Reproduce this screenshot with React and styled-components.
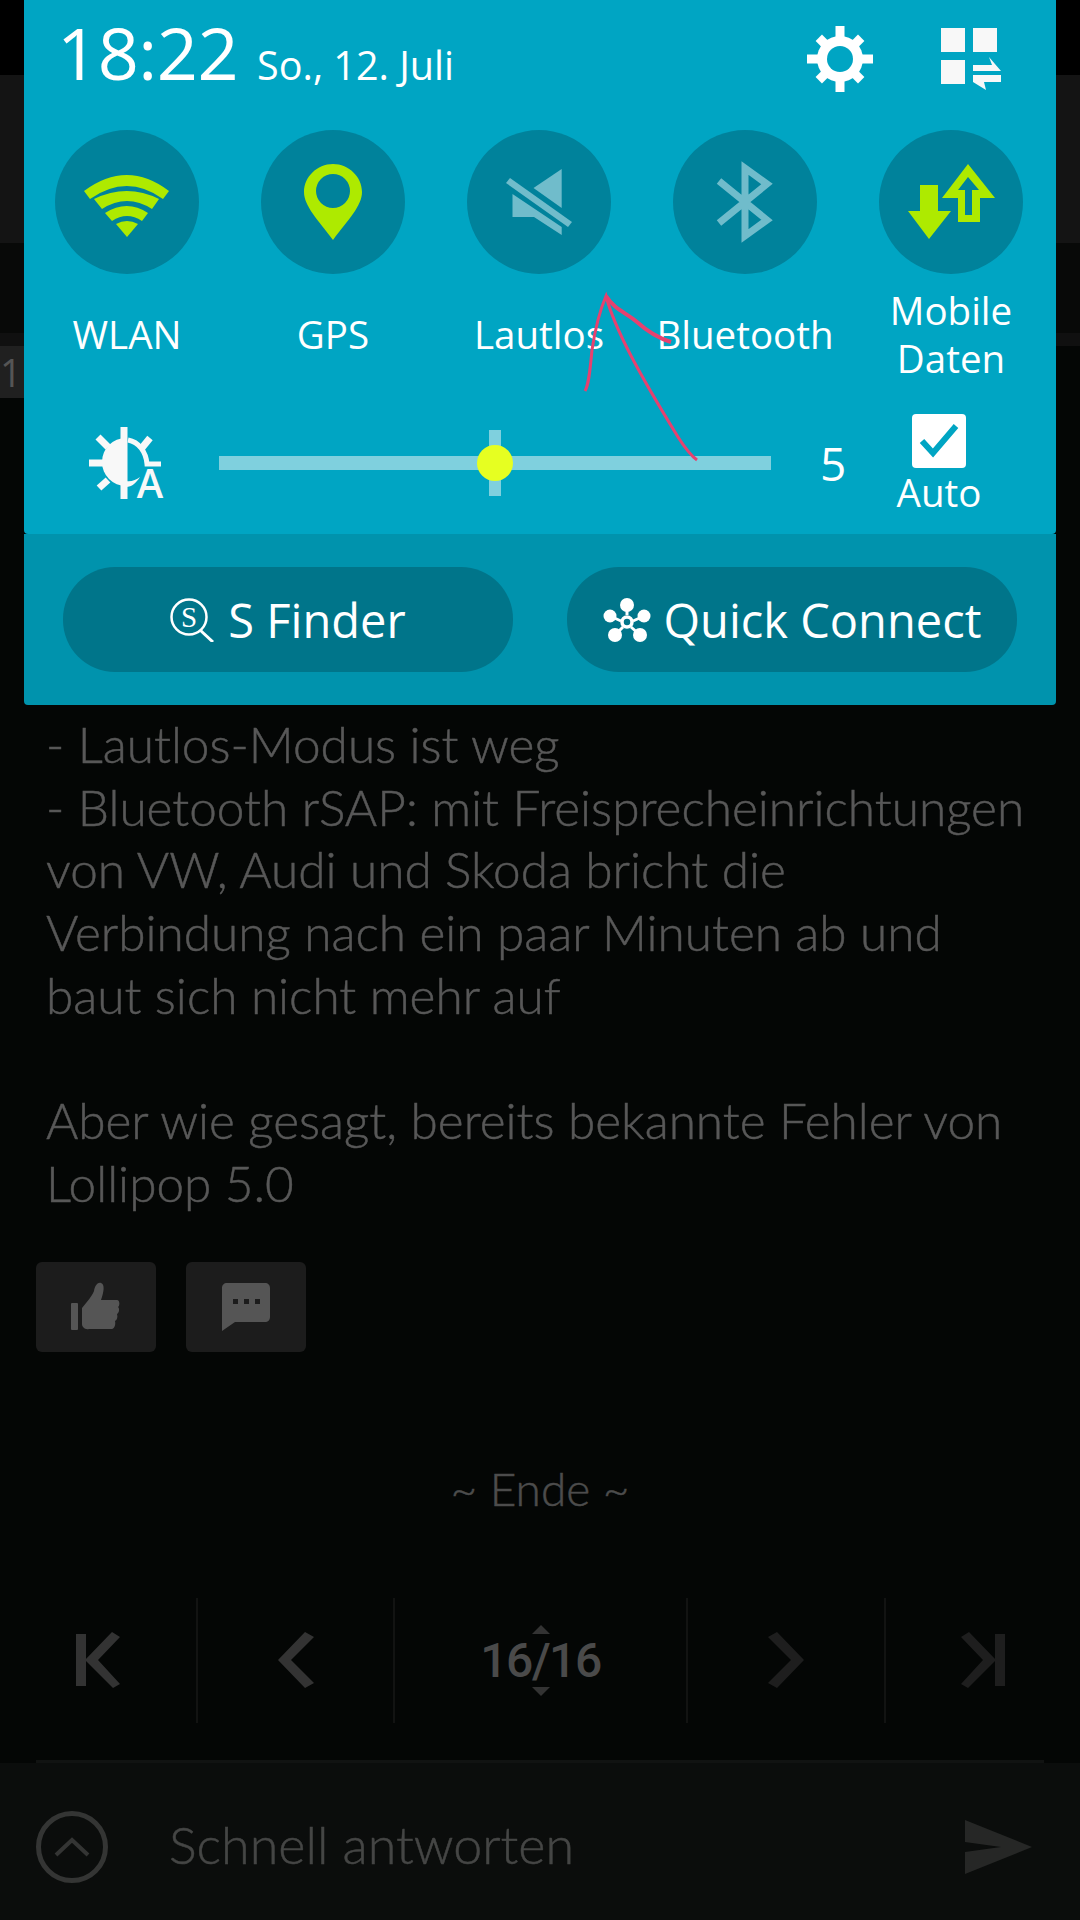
import React from "react";
import styled, { createGlobalStyle } from "styled-components";

const GlobalStyle = createGlobalStyle`
  html, body { margin: 0; padding: 0; background: #040605; }
  * { box-sizing: border-box; }
`;

const Screen = styled.div`
  position: relative;
  width: 1080px;
  height: 1920px;
  overflow: hidden;
  background: #040605;
  font-family: "Open Sans", "Liberation Sans", sans-serif;
`;

const TopBar = styled.div`
  height: 75px;
  background: #000;
`;

const HeaderBand = styled.div`
  height: 168px;
  background: #141414;
`;

const MiddleBand = styled.div`
  height: 103px;
  background: #080908;
  border-bottom: 13px solid #101010;
`;

const PageTag = styled.div`
  width: 24px;
  height: 52px;
  background: #202020;
  color: #555;
  font-size: 38px;
  line-height: 52px;
`;

const Post = styled.div`
  padding: 315px 46px 0;
  font-family: Lato, "Open Sans", sans-serif;
  font-weight: 300;
  font-size: 49.5px;
  line-height: 62.7px;
  color: #585858;
  -webkit-text-stroke: 0.5px #585858;
`;

const Line = styled.div`
  white-space: nowrap;
  min-height: 62.7px;
`;

const PostActions = styled.div`
  display: flex;
  gap: 30px;
  margin: 47px 0 0 -10px;
`;

const ActionButton = styled.div`
  width: 120px;
  height: 90px;
  border-radius: 6px;
  background: #1c1c1c;
  display: flex;
  align-items: center;
  justify-content: center;
`;

const EndMark = styled.div`
  margin-top: 107px;
  text-align: center;
  font-family: Lato, "Open Sans", sans-serif;
  font-weight: 300;
  font-size: 46px;
  line-height: 60px;
  color: #4c4c4c;
  -webkit-text-stroke: 0.5px #4c4c4c;
`;

const Pager = styled.div`
  display: grid;
  grid-template-columns: 196px 197px 293px 198px 196px;
  height: 125px;
  margin-top: 79px;
`;

const PagerCell = styled.div`
  display: flex;
  align-items: center;
  justify-content: center;
  position: relative;
  border-left: ${(p) => (p.$first ? "none" : "2px solid #121312")};
`;

const PageCount = styled.div`
  font-family: Roboto, "Open Sans", sans-serif;
  font-weight: 500;
  font-size: 48px;
  letter-spacing: -1.5px;
  color: #4a4a4a;
`;

const Arrow = styled.span`
  position: absolute;
  left: 50%;
  margin-left: -9px;
  ${(p) => (p.$up ? "top: 27px;" : "bottom: 27px;")}
  width: 0;
  height: 0;
  border-left: 9px solid transparent;
  border-right: 9px solid transparent;
  ${(p) => (p.$up ? "border-bottom: 9px solid #333;" : "border-top: 9px solid #333;")}
`;

const ReplyRule = styled.div`
  height: 3px;
  margin: 37px 36px 0;
  background: #111312;
`;

const ReplyBar = styled.div`
  height: 158px;
  background: #0b0d0c;
  display: flex;
  align-items: center;
  padding: 11px 48px 0 36px;
`;

const ReplyToggle = styled.div`
  width: 72px;
  height: 72px;
  border-radius: 50%;
  border: 5px solid #343534;
  display: flex;
  align-items: center;
  justify-content: center;
`;

const ReplyText = styled.div`
  flex: 1;
  margin: -7px 0 0 61px;
  font-family: Lato, "Open Sans", sans-serif;
  font-weight: 300;
  font-size: 52px;
  color: #454645;
  -webkit-text-stroke: 0.5px #454645;
`;

/* notification shade sits over the page */
const Shade = styled.div`
  position: absolute;
  top: 0;
  left: 24px;
  width: 1032px;
`;

const MainPanel = styled.div`
  height: 534px;
  background: #00a5c3;
  border-radius: 0 0 4px 4px;
  color: #fff;
`;

const ClockRow = styled.div`
  display: flex;
  align-items: baseline;
  height: 130px;
  padding: 12px 0 0 33px;
`;

const Clock = styled.div`
  font-size: 72px;
  line-height: 80px;
  letter-spacing: -0.5px;
`;

const DateText = styled.div`
  font-size: 39.5px;
  line-height: 46px;
  margin-left: 19px;
`;

const HeadIcons = styled.div`
  align-self: flex-start;
  margin-left: auto;
  display: flex;
  gap: 68px;
  padding: 14px 54px 0 0;
`;

const Toggles = styled.div`
  display: grid;
  grid-template-columns: repeat(5, 206px);
`;

const Toggle = styled.div`
  display: flex;
  flex-direction: column;
  align-items: center;
`;

const Disc = styled.div`
  width: 144px;
  height: 144px;
  border-radius: 50%;
  background: #00829b;
  display: flex;
  align-items: center;
  justify-content: center;
`;

const ToggleLabel = styled.div`
  height: 90px;
  margin-top: 15px;
  display: flex;
  align-items: center;
  text-align: center;
  font-size: 38.5px;
  line-height: 48px;
`;

const BrightnessRow = styled.div`
  display: flex;
  align-items: center;
  height: 88px;
  margin-top: 40px;
`;

const BrightnessIcon = styled.div`
  width: 195px;
  padding-left: 65px;
  display: flex;
`;

const Slider = styled.div`
  position: relative;
  width: 552px;
  height: 14px;
  background: #7fd0de;
`;

const SliderNotch = styled.div`
  position: absolute;
  left: 270px;
  top: -26px;
  width: 12px;
  height: 66px;
  background: #7fd0de;
`;

const SliderThumb = styled.div`
  position: absolute;
  left: 258px;
  top: -11px;
  width: 36px;
  height: 36px;
  border-radius: 50%;
  background: #e6ff21;
`;

const LevelValue = styled.div`
  width: 50px;
  margin-left: 49px;
  font-size: 46px;
  text-align: left;
`;

const AutoBox = styled.div`
  display: flex;
  flex-direction: column;
  align-items: center;
  margin: 3px 0 0 14px;
  width: 110px;
`;

const CheckBox = styled.div`
  width: 54px;
  height: 54px;
  border-radius: 4px;
  background: #fff;
  display: flex;
  align-items: center;
  justify-content: center;
`;

const AutoLabel = styled.div`
  font-size: 38.5px;
  line-height: 46px;
  margin-top: 1px;
`;

const SubPanel = styled.div`
  height: 171px;
  background: #0093ad;
  border-radius: 0 0 4px 4px;
  display: flex;
  justify-content: space-between;
  padding: 33px 39px 0;
`;

const Pill = styled.div`
  width: 450px;
  height: 105px;
  border-radius: 52px;
  background: #00758a;
  color: #fff;
  display: flex;
  align-items: center;
  justify-content: center;
  gap: 13px;
  font-size: 47px;
`;

/* marker scribble over the panel */
const Scribble = styled.svg`
  position: absolute;
  left: 0;
  top: 0;
  pointer-events: none;
`;

const Wifi = () => (
  <svg width="86" height="70" viewBox="0 -8 86 70">
    <g fill="#aeea00">
      <path d="M0 16 Q43 -16 85 16 L79 24 Q43 -2 6 24Z" />
      <path d="M10 24 Q43 8 75 24 L68 34 Q43 18 18 34Z" />
      <path d="M21 38 Q43 24 64 38 L58 46 Q43 36 28 46Z" />
      <path d="M32 49 Q43 43 54 49 L43 62Z" />
    </g>
  </svg>
);

const Pin = () => (
  <svg width="58" height="76" viewBox="0 0 58 76">
    <path
      fill="#aeea00"
      fillRule="evenodd"
      d="M29 0 C45 0 58 13 58 28 C58 42 44 56 29 76 C14 56 0 42 0 28 C0 13 13 0 29 0Z M29 10 A17 17 0 0 0 29 44 A17 17 0 0 0 29 10Z"
    />
  </svg>
);

const Mute = () => (
  <svg width="66" height="66" viewBox="0 0 66 66" fill="#70bccb">
    <path d="M27.5 19 L55.7 0 L55.7 39Z" />
    <path d="M6.5 25 L55.7 58 L55.7 66 L28 48 L6.5 48Z" />
    <path d="M4 9 L66 53 L62 58 L0 14Z" />
  </svg>
);

const Bluetooth = () => (
  <svg width="60" height="82" viewBox="0 0 60 82" fill="none" stroke="#70bccb" strokeWidth="7">
    <path d="M4 20 L52 59 L30 75 L30 7 L52 23 L4 62" />
  </svg>
);

const DataArrows = () => (
  <svg width="87" height="76" viewBox="0 0 87 76">
    <path fill="#aeea00" d="M12 21 H30 V47 H43 L21 75 L0 47 H12Z" />
    <path
      fill="#aeea00"
      fillRule="evenodd"
      d="M60 0 L87 34 H72 V58 H50 V34 H34Z M60 13 L50 26 H57 V51 H64 V26 H71Z"
    />
  </svg>
);

const Gear = () => (
  <svg width="66" height="66" viewBox="0 0 66 66">
    <g fill="#fff">
      <rect x="28.5" y="0" width="9" height="66" />
      <rect x="0" y="28.5" width="66" height="9" />
      <rect x="28.5" y="3" width="9" height="60" transform="rotate(45 33 33)" />
      <rect x="28.5" y="3" width="9" height="60" transform="rotate(-45 33 33)" />
      <circle cx="33" cy="33" r="23" />
    </g>
    <circle cx="33" cy="33" r="13" fill="#00a5c3" />
  </svg>
);

const QuickSettings = () => (
  <svg width="61" height="66" viewBox="0 0 61 66" fill="#f8f8f8">
    <rect x="0" y="2" width="24" height="24" />
    <rect x="32" y="2" width="24" height="24" />
    <rect x="0" y="34" width="24" height="24" />
    <path d="M32 39 H51 L48 31 L60 45 H32Z" />
    <path d="M32 49 H60 V56 H43 L45 64 L32 56Z" />
  </svg>
);

const AutoSun = () => (
  <svg width="76" height="72" viewBox="0 0 76 72" fill="#f8f8f8">
    <g stroke="#f8f8f8" strokeWidth="7" fill="none">
      <path d="M35 0 V72" />
      <path d="M0 36 H14" />
      <path d="M9 10 L19 20" />
      <path d="M61 11 L52 22" />
      <path d="M10 61 L19 53" />
    </g>
    <path stroke="#f8f8f8" strokeWidth="5" fill="none" d="M39 13 C50 15 57 25 58 37 H72" />
    <path d="M37 11 A24 24 0 0 0 37 59Z" />
    <path d="M37 60 C43 60 47 56 51 50 C47 53 42 55 37 54Z" />
    <text x="61" y="71" textAnchor="middle" fontFamily="Open Sans" fontWeight="600" fontSize="40" fill="#f8f8f8">A</text>
  </svg>
);

const Check = () => (
  <svg width="40" height="36" viewBox="0 0 40 36" fill="none" stroke="#00a5c3" strokeWidth="6">
    <path d="M3 18 L14 30 L37 3" />
  </svg>
);

const FinderIcon = () => (
  <svg width="45" height="44" viewBox="0 0 45 44" fill="none" stroke="#fff" strokeWidth="2.5">
    <circle cx="19" cy="19" r="17.5" />
    <path d="M30 32 L43 44" strokeWidth="3" />
    <text x="19" y="29" textAnchor="middle" fontFamily="Liberation Serif" fontSize="29" fill="#fff" stroke="none">S</text>
  </svg>
);

const ConnectIcon = () => (
  <svg width="48" height="44" viewBox="0 0 48 44" fill="#fff">
    <circle cx="24" cy="7" r="7" />
    <circle cx="7" cy="18" r="6.5" />
    <circle cx="41" cy="18" r="6.5" />
    <circle cx="12" cy="37" r="7" />
    <circle cx="37" cy="37" r="7" />
    <g stroke="#fff" strokeWidth="3">
      <path d="M24 7 V17 M7 18 L18 23 M41 18 L30 23 M12 37 L20 29 M37 37 L28 29" />
    </g>
    <circle cx="24" cy="24" r="5" fill="none" stroke="#fff" strokeWidth="3.5" />
  </svg>
);

const ThumbUp = () => (
  <svg width="50" height="50" viewBox="0 0 50 50" fill="#555">
    <rect x="0" y="21" width="7" height="27" rx="1" />
    <path d="M11 26 C16 20 21 14 23 9 C24 3 27 0 30 1 C34 2 33 10 30 18 H46 C49 18 49 24 47 25 C49 27 48 31 46 32 C47 35 46 38 44 39 C45 43 43 47 41 47 H18 C14 48 11 45 11 42Z" />
  </svg>
);

const Comment = () => (
  <svg width="48" height="48" viewBox="0 0 48 48">
    <path fill="#555" d="M5 0 H43 C46 0 48 2 48 5 V34 C48 37 46 39 43 39 H13 L0 48 V5 C0 2 2 0 5 0Z" />
    <g fill="#1c1c1c">
      <rect x="11" y="16" width="5" height="5" />
      <rect x="22" y="16" width="5" height="5" />
      <rect x="33" y="16" width="5" height="5" />
    </g>
  </svg>
);

const First = () => (
  <svg width="44" height="56" viewBox="0 0 44 56" fill="#333">
    <rect x="0" y="2" width="10" height="52" />
    <path d="M36 0 L44 5 L22 28 L44 52 L37 56 L9 28Z" />
  </svg>
);

const Prev = () => (
  <svg width="36" height="56" viewBox="0 0 36 56" fill="#333">
    <path d="M27 0 L36 5 L13 28 L36 51 L27 56 L0 28Z" />
  </svg>
);

const Next = () => (
  <svg width="36" height="56" viewBox="0 0 36 56" fill="#1e1e1e">
    <path d="M9 0 L0 5 L23 28 L0 51 L9 56 L36 28Z" />
  </svg>
);

const Last = () => (
  <svg width="44" height="56" viewBox="0 0 44 56" fill="#1e1e1e">
    <rect x="34" y="2" width="10" height="52" />
    <path d="M8 0 L0 5 L22 28 L0 52 L7 56 L35 28Z" />
  </svg>
);

const Chevron = () => (
  <svg width="36" height="20" viewBox="0 0 36 20" fill="none" stroke="#343534" strokeWidth="4">
    <path d="M2 18 L18 3 L34 18" />
  </svg>
);

const Send = () => (
  <svg width="67" height="54" viewBox="0 0 67 54" fill="#262726">
    <path d="M0 0 L67 27 L0 54 L0 32 L36 27 L0 22Z" />
  </svg>
);

const toggles = [
  { label: "WLAN", icon: <Wifi /> },
  { label: "GPS", icon: <Pin /> },
  { label: "Lautlos", icon: <Mute /> },
  { label: "Bluetooth", icon: <Bluetooth /> },
  { label: <>Mobile<br />Daten</>, icon: <DataArrows /> },
];

const postLines = [
  "- Lautlos-Modus ist weg",
  "- Bluetooth rSAP: mit Freisprecheinrichtungen",
  "von VW, Audi und Skoda bricht die",
  "Verbindung nach ein paar Minuten ab und",
  "baut sich nicht mehr auf",
  "",
  "Aber wie gesagt, bereits bekannte Fehler von",
  "Lollipop 5.0",
];

export default function App() {
  return (
    <Screen>
      <GlobalStyle />
      <TopBar />
      <HeaderBand />
      <MiddleBand />
      <PageTag>1</PageTag>

      <Post>
        {postLines.map((text, i) => (
          <Line key={i}>{text}</Line>
        ))}
        <PostActions>
          <ActionButton><ThumbUp /></ActionButton>
          <ActionButton><Comment /></ActionButton>
        </PostActions>
      </Post>

      <EndMark>~ Ende ~</EndMark>

      <Pager>
        <PagerCell $first><First /></PagerCell>
        <PagerCell><Prev /></PagerCell>
        <PagerCell>
          <Arrow $up />
          <PageCount>16/16</PageCount>
          <Arrow />
        </PagerCell>
        <PagerCell><Next /></PagerCell>
        <PagerCell><Last /></PagerCell>
      </Pager>

      <ReplyRule />
      <ReplyBar>
        <ReplyToggle><Chevron /></ReplyToggle>
        <ReplyText>Schnell antworten</ReplyText>
        <Send />
      </ReplyBar>

      <Shade>
        <MainPanel>
          <ClockRow>
            <Clock>18:22</Clock>
            <DateText>So., 12. Juli</DateText>
            <HeadIcons>
              <Gear />
              <QuickSettings />
            </HeadIcons>
          </ClockRow>
          <Toggles>
            {toggles.map((t, i) => (
              <Toggle key={i}>
                <Disc>{t.icon}</Disc>
                <ToggleLabel>{t.label}</ToggleLabel>
              </Toggle>
            ))}
          </Toggles>
          <BrightnessRow>
            <BrightnessIcon><AutoSun /></BrightnessIcon>
            <Slider>
              <SliderNotch />
              <SliderThumb />
            </Slider>
            <LevelValue>5</LevelValue>
            <AutoBox>
              <CheckBox><Check /></CheckBox>
              <AutoLabel>Auto</AutoLabel>
            </AutoBox>
          </BrightnessRow>
        </MainPanel>
        <SubPanel>
          <Pill><FinderIcon />S Finder</Pill>
          <Pill><ConnectIcon />Quick Connect</Pill>
        </SubPanel>
      </Shade>

      <Scribble width="1080" height="480" viewBox="0 0 1080 480" fill="none" stroke="#e6416f" strokeWidth="3">
        <path d="M585 391 C589 384 590 370 592 350 C595 330 600 310 606 296 C615 330 640 375 678 437 C685 448 690 455 697 460" />
        <path d="M606 296 C615 310 625 312 637 322 C648 332 658 338 671 342" strokeWidth="4" />
      </Scribble>
    </Screen>
  );
}
